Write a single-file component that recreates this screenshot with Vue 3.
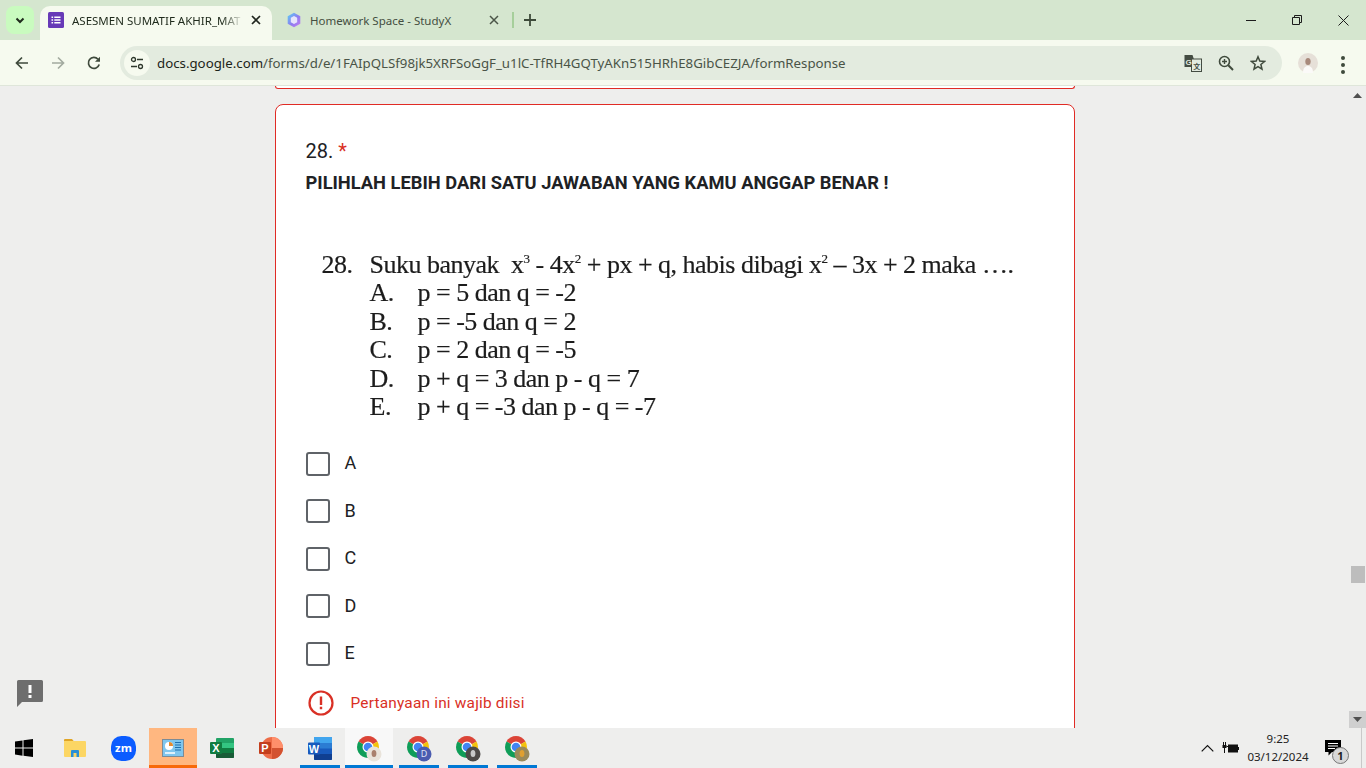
<template>
  <div class="screen">
    <header class="tabstrip">
      <button class="tab-search">
        <svg width="12" height="12" viewBox="0 0 12 12"><path d="M2.500 4.500 6 8l3.500-3.500" fill="none" stroke="#1f2a1c" stroke-width="2"/></svg>
      </button>
      <div class="tab active">
        <svg class="favicon" width="16" height="16" viewBox="0 0 16 16">
          <rect width="16" height="16" rx="1.500" fill="#673ab7"/>
          <path d="M3.500 4.500h1.600v1.400H3.500zM3.500 7.300h1.600v1.400H3.500zM3.500 10.100h1.600v1.400H3.500zM6.300 4.500h6.200v1.400H6.300zM6.300 7.300h6.200v1.400H6.300zM6.300 10.100h6.200v1.400H6.300z" fill="#fff"/>
        </svg>
        <span class="tab-title fade">ASESMEN SUMATIF AKHIR_MAT</span>
        <svg class="tab-close" width="10" height="10" viewBox="0 0 10 10"><path d="M1 1l8 8M9 1l-8 8" stroke="#20261e" stroke-width="1.700"/></svg>
      </div>
      <div class="tab">
        <svg class="favicon" width="16" height="16" viewBox="0 0 16 16">
          <defs><linearGradient id="sx" x1="0" y1="0" x2="1" y2="1"><stop offset="0" stop-color="#59d0f5"/><stop offset=".55" stop-color="#8f7bf0"/><stop offset="1" stop-color="#c77df0"/></linearGradient></defs>
          <path d="M8 .8l6.300 3.500v7.400L8 15.200l-6.300-3.500V4.300z" fill="url(#sx)"/>
          <path d="M8 4l3.200 1.800v4.400L8 12l-3.200-1.800V5.800z" fill="#e7e4fd"/>
        </svg>
        <span class="tab-title muted">Homework Space - StudyX</span>
        <svg class="tab-close" width="10" height="10" viewBox="0 0 10 10"><path d="M1 1l8 8M9 1l-8 8" stroke="#4b5548" stroke-width="1.500"/></svg>
      </div>
      <i class="tab-sep"></i>
      <svg class="new-tab" width="12" height="12" viewBox="0 0 12 12"><path d="M6 0v12M0 6h12" stroke="#3d4a39" stroke-width="1.800"/></svg>
      <div class="win-controls">
        <span class="win-btn"><svg width="10" height="10" viewBox="0 0 10 10"><path d="M0 5.500h10" stroke="#1c1c1c"/></svg></span>
        <span class="win-btn"><svg width="10" height="10" viewBox="0 0 10 10"><path d="M.5 2.500h7v7h-7zM2.500 2.500v-2h7v7h-2" fill="none" stroke="#1c1c1c"/></svg></span>
        <span class="win-btn"><svg width="11" height="11" viewBox="0 0 11 11"><path d="M.5.500l10 10M10.500.500l-10 10" stroke="#1c1c1c"/></svg></span>
      </div>
    </header>

    <nav class="toolbar">
      <span class="nav-btn">
        <svg width="14" height="14" viewBox="0 0 14 14"><path d="M13 7H2M7 1.500 1.500 7 7 12.500" fill="none" stroke="#3f4a3c" stroke-width="1.700"/></svg>
      </span>
      <span class="nav-btn">
        <svg width="14" height="14" viewBox="0 0 14 14"><path d="M1 7h11M7 1.500 12.500 7 7 12.500" fill="none" stroke="#a3aba0" stroke-width="1.700"/></svg>
      </span>
      <span class="nav-btn">
        <svg width="14" height="14" viewBox="0 0 14 14"><path d="M12.200 8.500A5.500 5.500 0 1 1 11 3.200" fill="none" stroke="#3f4a3c" stroke-width="1.700"/><path d="M13 .8v5H8z" fill="#3f4a3c"/></svg>
      </span>
      <div class="omnibox">
        <span class="site-icon">
          <svg width="14" height="14" viewBox="0 0 14 14" fill="none" stroke="#2f382c" stroke-width="1.300"><circle cx="3.500" cy="3.500" r="2"/><path d="M7 3.500h6M1 10.500h6"/><circle cx="10.500" cy="10.500" r="2"/></svg>
        </span>
        <span class="url"><b>docs.google.com</b>/forms/d/e/1FAIpQLSf98jk5XRFSoGgF_u1lC-TfRH4GQTyAKn515HRhE8GibCEZJA/formResponse</span>
        <div class="omni-actions">
          <svg width="18" height="18" viewBox="0 0 18 18">
            <path d="M0 1h8l1.500 4.500H14V16H9l-1-3H0z" fill="#444c42" transform="translate(.5 0)"/>
            <rect x="7.500" y="5" width="10" height="12.500" fill="#e3ebdf" stroke="#444c42"/>
            <text x="1.500" y="10.500" class="tr-g">G</text>
            <text x="9.200" y="14.500" class="tr-x">文</text>
          </svg>
          <svg width="16" height="16" viewBox="0 0 16 16" fill="none" stroke="#3f4a3c"><circle cx="6.500" cy="6.500" r="5" stroke-width="1.600"/><path d="M10.300 10.300 15 15" stroke-width="2"/><path d="M4 6.500h5M6.500 4v5" stroke-width="1.400"/></svg>
          <svg width="16" height="16" viewBox="0 0 16 16"><path d="m8 1.800 1.800 4.300 4.700.4-3.600 3 1.100 4.600L8 11.700l-4 2.400 1.100-4.600-3.600-3 4.700-.4z" fill="none" stroke="#3f4a3c" stroke-width="1.500"/></svg>
        </div>
      </div>
      <span class="avatar">
        <svg width="20" height="20" viewBox="0 0 20 20"><circle cx="10" cy="10" r="10" fill="#e6e0d8"/><ellipse cx="10" cy="8.500" rx="2.700" ry="3.500" fill="#a88a7c"/><path d="M5 20c0-5 2-7 5-7s5 2 5 7z" fill="#fbfaf8"/></svg>
      </span>
      <span class="menu-dots"><i></i><i></i><i></i></span>
    </nav>

    <div class="viewport">
      <main class="form-page">
        <div class="prev-card"></div>
        <section class="card">
          <h2 class="q-title">28. <span class="req">*</span></h2>
          <p class="q-desc">PILIHLAH LEBIH DARI SATU JAWABAN YANG KAMU ANGGAP BENAR !</p>
          <div class="q-image">
            <div class="img-row">
              <span class="img-no">28.</span>
              <span class="img-lead">Suku banyak&nbsp; x<sup>3</sup> - 4x<sup>2</sup> + px + q, habis dibagi x<sup>2</sup> – 3x + 2 maka ….</span>
            </div>
            <div class="img-row img-opt" v-for="c in imageChoices" :key="c.letter">
              <span class="img-letter">{{ c.letter }}.</span>
              <span>{{ c.text }}</span>
            </div>
          </div>
          <label class="option" v-for="o in options" :key="o">
            <span class="checkbox"></span>
            <span class="opt-label">{{ o }}</span>
          </label>
          <div class="error-row">
            <svg width="26" height="26" viewBox="0 0 26 26"><circle cx="13" cy="13" r="11.500" fill="none" stroke="#d93025" stroke-width="2.200"/><path d="M11.800 6.500h2.400v8.500h-2.400zM11.800 16.800h2.400v2.500h-2.400z" fill="#d93025"/></svg>
            <span>Pertanyaan ini wajib diisi</span>
          </div>
        </section>
      </main>

      <aside class="scrollbar">
        <svg class="sb-arrow" width="9" height="5" viewBox="0 0 9 5"><path d="M4.500 0 9 5H0z" fill="#505050"/></svg>
        <div class="sb-track"><div class="sb-thumb"></div></div>
        <div class="sb-down"><svg width="9" height="5" viewBox="0 0 9 5"><path d="M0 0h9L4.500 5z" fill="#505050"/></svg></div>
      </aside>

      <button class="feedback">
        <svg width="28" height="28" viewBox="0 0 28 28"><path d="M2.500 1h23a1.500 1.500 0 0 1 1.500 1.500v19a1.500 1.500 0 0 1-1.500 1.500H6l-5 5V2.500A1.500 1.500 0 0 1 2.500 1z" fill="#6e6e6e"/><path d="M12.500 6h3v8h-3zM12.500 16h3v3h-3z" fill="#fff"/></svg>
      </button>
    </div>

    <footer class="taskbar">
      <div class="task-item start">
        <svg width="18" height="18" viewBox="0 0 18 18" fill="#000"><path d="M0 2.500 7.500 1.400v7.200H0zM8.500 1.300 18 0v8.600H8.500zM0 9.500h7.500v7.200L0 15.600zM8.500 9.500H18V18l-9.500-1.300z"/></svg>
      </div>
      <div class="task-item folder">
        <svg width="22" height="20" viewBox="0 0 22 20"><path d="M0 2a1 1 0 0 1 1-1h7l2 2.500H0z" fill="#e0a526"/><rect y="3" width="22" height="16" rx="1" fill="#fcd664"/><path d="M7 19v-6a1 1 0 0 1 1-1h6a1 1 0 0 1 1 1v6h-2.500v-4h-3v4z" fill="#2a8fd6"/></svg>
      </div>
      <div class="task-item">
        <svg width="25" height="25" viewBox="0 0 24 24"><rect width="24" height="24" rx="10" fill="#0b5cff"/><text x="12" y="15.500" text-anchor="middle" class="zm">zm</text></svg>
      </div>
      <div class="task-item pinned">
        <svg width="22" height="18" viewBox="0 0 22 18"><rect x=".5" y=".5" width="21" height="17" fill="#7fc6ee" stroke="#7c8b96"/><circle cx="7" cy="7" r="4" fill="#fff"/><path d="M7 7V3a4 4 0 0 1 4 4z" fill="#e58a2e"/><path d="M13 3.500h6M13 6h6M13 8.500h6M13 11h6" stroke="#1f6fb0"/><path d="M3 14h10" stroke="#fff" stroke-width="1.500"/></svg>
      </div>
      <div class="task-item">
        <svg width="24" height="22" viewBox="0 0 24 22"><rect x="6" y="1" width="18" height="20" rx="1" fill="#21a366"/><path d="M6 6h18v5H6z" fill="#33c481"/><path d="M6 11h18v5H6z" fill="#107c41"/><path d="M6 16h18v4a1 1 0 0 1-1 1H7a1 1 0 0 1-1-1z" fill="#185c37"/><rect y="5" width="12" height="12" rx="1" fill="#107c41"/><text x="6" y="15" text-anchor="middle" class="office">X</text></svg>
      </div>
      <div class="task-item">
        <svg width="24" height="24" viewBox="0 0 24 24"><circle cx="13" cy="12" r="11" fill="#ed6c47"/><path d="M13 1a11 11 0 0 1 11 11H13z" fill="#ff8f6b"/><path d="M13 12h11a11 11 0 0 1-11 11z" fill="#d35230"/><rect y="6" width="12" height="12" rx="1" fill="#c43e1c"/><text x="6" y="16" text-anchor="middle" class="office">P</text></svg>
      </div>
      <div class="task-item running">
        <svg width="24" height="23" viewBox="0 0 24 23"><rect x="6" y="0" width="18" height="23" rx="1" fill="#2b7cd3"/><path d="M6 0h17a1 1 0 0 1 1 1v5H6z" fill="#41a5ee"/><path d="M6 11.500h18V17H6z" fill="#185abd"/><path d="M6 17h18v5a1 1 0 0 1-1 1H7a1 1 0 0 1-1-1z" fill="#103f91"/><rect y="5.500" width="12" height="12" rx="1" fill="#185abd"/><text x="6" y="15.500" text-anchor="middle" class="office">W</text></svg>
      </div>
      <div class="task-item running" v-for="(p, i) in chromeProfiles" :key="i" :class="{ current: i === 0 }">
        <svg width="26" height="28" viewBox="0 -1 26 28">
          <path d="M12 12 2.500 6.500a11 11 0 0 1 19 0z" fill="#db4437"/>
          <path d="M12 12l9.500-5.500A11 11 0 0 1 12 23z" fill="#f4c20d"/>
          <path d="M12 12v11A11 11 0 0 1 2.500 6.500z" fill="#0f9d58"/>
          <circle cx="12" cy="12" r="5.500" fill="#fff"/>
          <circle cx="12" cy="12" r="4.300" fill="#4285f4"/>
          <circle cx="18" cy="19" r="7.500" :fill="p.bg"/>
          <ellipse v-if="p.dot" cx="18" cy="18.500" rx="2.400" ry="3.500" :fill="p.dot"/>
          <text v-if="p.letter" x="18" y="22" text-anchor="middle" class="badge-letter">{{ p.letter }}</text>
        </svg>
      </div>
      <div class="tray">
        <svg width="13" height="8" viewBox="0 0 13 8"><path d="M.7 7.300 6.500 1.500l5.800 5.800" fill="none" stroke="#111" stroke-width="1.200"/></svg>
        <svg class="battery" width="17" height="12" viewBox="0 0 17 12"><rect x="6.500" y="3" width="9" height="7" fill="#111" stroke="#111"/><path d="M16 5h1v3h-1z" fill="#111"/><path d="M1.500 0v3M3.500 0v3M2.500 6v5" fill="none" stroke="#111"/><rect x=".5" y="3" width="4" height="3" fill="#111"/><path d="M4.500 4.500h2" stroke="#111"/></svg>
        <div class="clock"><span>9:25</span><span>03/12/2024</span></div>
        <span class="notif">
          <svg width="17" height="17" viewBox="0 0 17 17"><path d="M0 0h16v12H7l-3.500 3.500V12H0z" fill="#000"/><path d="M3 3.500h10M3 6h10M3 8.500h7" stroke="#fff"/></svg>
          <em>1</em>
        </span>
      </div>
    </footer>
  </div>
</template>

<script setup>
const imageChoices = [
  { letter: 'A', text: 'p = 5 dan q = -2' },
  { letter: 'B', text: 'p = -5 dan q = 2' },
  { letter: 'C', text: 'p = 2 dan q = -5' },
  { letter: 'D', text: 'p + q = 3 dan p - q = 7' },
  { letter: 'E', text: 'p + q = -3 dan p - q = -7' }
]

const options = ['A', 'B', 'C', 'D', 'E']

const chromeProfiles = [
  { bg: '#e9e3da', dot: '#a9806c' },
  { bg: '#4a5bb0', letter: 'D' },
  { bg: '#4e4a48', dot: '#c9c9c9' },
  { bg: '#9a8a5a', dot: '#e0a030' }
]
</script>

<style>
html, body { margin: 0; overflow: hidden; }
</style>

<style scoped>
.screen {
  width: 1366px;
  height: 768px;
  display: flex;
  flex-direction: column;
  overflow: hidden;
  font-family: "Noto Sans", sans-serif;
  background: #eeeeed;
}

/* tab strip */
.tabstrip {
  height: 40px;
  flex: none;
  background: #d5e6cf;
  display: flex;
  align-items: flex-end;
  padding-left: 6px;
}
.tab-search {
  width: 28px;
  height: 28px;
  margin: 0 6px 6px 0;
  padding: 0;
  border: 0;
  border-radius: 8px;
  background: #c9fbbf;
  display: flex;
  align-items: center;
  justify-content: center;
}
.tab {
  width: 232px;
  height: 34px;
  flex: none;
  display: flex;
  align-items: center;
  padding: 0 10px 6px 8px;
  box-sizing: border-box;
  border-radius: 10px 10px 0 0;
  font-size: 11.500px;
  color: #1f2a1c;
}
.tab.active { background: #f6faef; padding-right: 11px; }
.tab:not(.active) { width: 241px; padding-left: 14px; padding-right: 14px; }
.favicon { flex: none; margin-right: 8px; }
.tab-title {
  flex: 1;
  min-width: 0;
  white-space: nowrap;
  overflow: hidden;
}
.fade {
  -webkit-mask-image: linear-gradient(to right, #000 88%, transparent);
  mask-image: linear-gradient(to right, #000 88%, transparent);
}
.muted { color: #444e41; }
.tab-close { flex: none; margin-left: 8px; }
.tab-sep {
  width: 2px;
  height: 16px;
  margin: 0 0 12px -1px;
  background: #a6cf9b;
}
.new-tab { margin: 0 0 14px 10px; }
.win-controls {
  margin-left: auto;
  align-self: flex-start;
  display: flex;
}
.win-btn {
  width: 46px;
  height: 40px;
  display: flex;
  align-items: center;
  justify-content: center;
}

/* toolbar */
.toolbar {
  height: 46px;
  flex: none;
  box-sizing: border-box;
  background: #f6faef;
  border-bottom: 1px solid #dfe6da;
  display: flex;
  align-items: flex-start;
  padding: 6px 0 0 4px;
}
.nav-btn {
  width: 36px;
  height: 34px;
  display: flex;
  align-items: center;
  justify-content: center;
}
.omnibox {
  width: 1162px;
  height: 34px;
  margin-left: 8px;
  border-radius: 17px;
  background: #e3ebdf;
  display: flex;
  align-items: center;
  padding-left: 4px;
  box-sizing: border-box;
}
.site-icon {
  width: 26px;
  height: 26px;
  border-radius: 50%;
  background: #f6faef;
  display: flex;
  align-items: center;
  justify-content: center;
  margin-right: 7px;
}
.url {
  font-size: 13.270px;
  color: #4a5447;
  white-space: nowrap;
}
.url b { font-weight: 400; color: #1c2419; }
.omni-actions {
  margin-left: auto;
  display: flex;
  align-items: center;
  gap: 16px;
  padding-right: 16px;
}
.tr-g { font: 700 8px "Liberation Sans", sans-serif; fill: #e3ebdf; }
.tr-x { font: 700 7px "Noto Sans CJK SC", sans-serif; fill: #444c42; }
.avatar {
  margin: 7px 0 0 16px;
  height: 20px;
}
.menu-dots {
  margin: 10px 0 0 23px;
  display: flex;
  flex-direction: column;
  gap: 3px;
}
.menu-dots i {
  width: 4px;
  height: 4px;
  border-radius: 50%;
  background: #3f4a3c;
}

/* page */
.viewport {
  flex: 1;
  min-height: 0;
  display: flex;
  position: relative;
  overflow: hidden;
}
.form-page {
  flex: 1;
  min-width: 0;
}
.prev-card {
  width: 800px;
  height: 3px;
  margin: 0 auto 15px;
  box-sizing: border-box;
  border: 1px solid #e02b25;
  border-top: 0;
  border-radius: 0 0 8px 8px;
  background: #fff;
}
.card {
  width: 800px;
  margin: 0 auto;
  box-sizing: border-box;
  border: 1px solid #e02b25;
  border-radius: 8px;
  background: #fff;
  padding: 34px 30px 60px;
  font-family: Roboto, sans-serif;
  color: #202124;
}
.q-title {
  margin: 0;
  font-size: 20px;
  font-weight: 400;
  line-height: 24px;
}
.req { color: #d93025; }
.q-desc {
  margin: 8px 0 0;
  font-size: 18.300px;
  font-weight: 700;
  line-height: 24px;
}
.q-image {
  margin: 55.500px 0 0 16px;
  height: 189.500px;
  font-family: "Liberation Serif", serif;
  font-size: 26px;
  letter-spacing: -0.5px;
  line-height: 28.500px;
  color: #1c1c1c;
  -webkit-text-stroke: 0.2px #1c1c1c;
  filter: blur(0.45px);
}
.img-row { display: flex; white-space: nowrap; }
.img-no { width: 48px; flex: none; }
.img-opt { padding-left: 48px; }
.img-letter { width: 48px; flex: none; }
.img-lead sup { font-size: 13px; line-height: 0; }
.option {
  height: 47.500px;
  display: flex;
  align-items: center;
  font-size: 18px;
}
.checkbox {
  width: 24px;
  height: 24px;
  box-sizing: border-box;
  border: 2px solid #5f6368;
  border-radius: 3px;
  margin-right: 15px;
}
.opt-label { position: relative; top: -1px; }
.error-row {
  display: flex;
  align-items: center;
  margin-top: 12px;
  font-size: 15.400px;
  letter-spacing: 0.2px;
  color: #d93025;
}
.error-row svg { margin-right: 17px; margin-left: 2px; }

/* scrollbar */
.scrollbar {
  width: 17px;
  flex: none;
  display: flex;
  flex-direction: column;
  align-items: center;
  background: #eeeeed;
}
.sb-arrow { margin-top: 7px; flex: none; }
.sb-track { flex: 1; width: 100%; padding-top: 468px; box-sizing: border-box; }
.sb-thumb { width: 14px; height: 17px; margin: 0 auto; background: #bdbdbd; }
.sb-down {
  width: 17px;
  height: 17px;
  background: #cfcfcf;
  display: flex;
  align-items: center;
  justify-content: center;
}
.feedback {
  position: absolute;
  left: 16px;
  top: 593px;
  padding: 0;
  border: 0;
  background: none;
  line-height: 0;
}

/* taskbar */
.taskbar {
  height: 40px;
  flex: none;
  display: flex;
  gap: 1.200px;
  background: #eeeeed;
  position: relative;
}
.taskbar::after {
  content: "";
  position: absolute;
  right: 4px;
  top: 0;
  bottom: 0;
  width: 1px;
  background: #c9c9c9;
}
.task-item {
  width: 48px;
  height: 40px;
  flex: none;
  box-sizing: border-box;
  display: flex;
  align-items: center;
  justify-content: center;
}
.start { width: 49px; padding-right: 1px; }
.folder { padding-left: 2px; }
.pinned { background: #ffb780; border-bottom: 3px solid #f7690a; padding-top: 3px; }
.running {
  background: linear-gradient(#0078d4, #0078d4) center bottom / 40px 3px no-repeat;
}
.running.current {
  background: linear-gradient(#0078d4, #0078d4) center bottom / 48px 3px no-repeat, #f8f8f8;
}
.zm { font: 700 11px "Open Sans", sans-serif; fill: #fff; }
.office { font: 700 11px "Liberation Sans", sans-serif; fill: #fff; }
.badge-letter { font: 400 9px "Noto Sans", sans-serif; fill: #dfe3f5; }
.tray {
  margin-left: auto;
  display: flex;
  align-items: center;
  padding-right: 24px;
}
.battery { margin-left: 8px; }
.clock {
  width: 62px;
  margin-left: 8px;
  display: flex;
  flex-direction: column;
  align-items: center;
  font-size: 11.500px;
  line-height: 18px;
  color: #222;
}
.notif {
  position: relative;
  margin-left: 16px;
  line-height: 0;
}
.notif em {
  position: absolute;
  left: 7px;
  top: 7px;
  width: 15px;
  height: 15px;
  border: 1px solid #777;
  border-radius: 50%;
  background: #d8d8d8;
  font: 700 11px/15px "Noto Sans", sans-serif;
  text-align: center;
  color: #222;
}
</style>
